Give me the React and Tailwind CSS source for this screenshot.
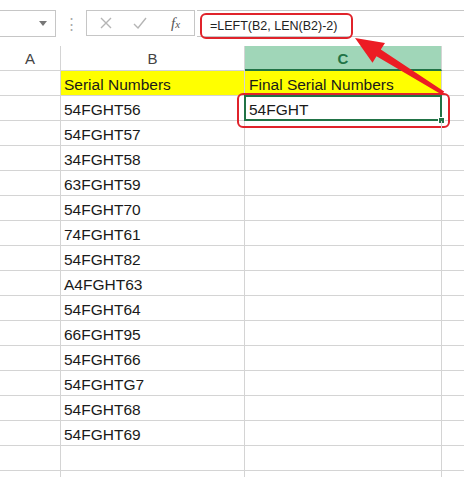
import { Fragment } from 'react'

const serials = [
  '54FGHT56', '54FGHT57', '34FGHT58', '63FGHT59', '54FGHT70', '74FGHT61', '54FGHT82',
  'A4FGHT63', '54FGHT64', '66FGHT95', '54FGHT66', '54FGHTG7', '54FGHT68', '54FGHT69',
]

const font = { fontFamily: '"Liberation Sans", Arial, sans-serif' }

function Arrow() {
  return (
    <svg className="absolute left-0 top-0 pointer-events-none" width="464" height="477" viewBox="0 0 464 477">
      <polygon
        points="355,38 385,43 380.8,49.6 444.2,91.4 442,94.8 376.5,56.2 372.5,62.8"
        fill="#ec1c24"
      />
    </svg>
  )
}

function Toolbar() {
  return (
    <div className="flex items-start h-[46px] pt-[10px] text-[#999]">
      {/* name box */}
      <div className="relative w-[56px] h-[27px] border border-l-0 border-[#c6c6c6]">
        <span className="absolute left-[39px] top-[10px] w-0 h-0 border-l-[4px] border-r-[4px] border-t-[5px] border-l-transparent border-r-transparent border-t-[#777]" />
      </div>
      <div className="w-[30px] h-[26px] flex items-center justify-center text-[#aaa] text-[15px] leading-none">⋮</div>
      {/* cancel / enter / fx */}
      <div className="w-[109px] h-[26px] border border-[#c6c6c6] flex items-center">
        <svg className="ml-[13px]" width="12" height="12" viewBox="0 0 12 12">
          <path d="M1 1 L11 11 M11 1 L1 11" stroke="#b5b5b5" strokeWidth="1.4" fill="none" />
        </svg>
        <svg className="ml-[21px]" width="14" height="12" viewBox="0 0 14 12">
          <path d="M1 7 L5 11 L13 1" stroke="#b5b5b5" strokeWidth="1.4" fill="none" />
        </svg>
        <span
          className="ml-[24px] text-[15px] italic text-[#555]"
          style={{ fontFamily: '"Liberation Serif", "Times New Roman", serif' }}
        >
          f<span className="text-[11px]">x</span>
        </span>
      </div>
      {/* formula input */}
      <div className="relative flex-1 h-[27px] ml-[2px] border-y border-[#c6c6c6]">
        <div className="absolute left-[3px] top-[2px] w-[153px] h-[26px] border-2 border-[#e0232b] rounded-[6px]" />
        <span className="absolute left-[13px] top-[6px] text-[12.5px] text-[#222]" style={font}>
          =LEFT(B2, LEN(B2)-2)
        </span>
      </div>
    </div>
  )
}

export default function App() {
  const rows = [['Serial Numbers', 'Final Serial Numbers'], ...serials.map((s, i) => [s, i === 0 ? '54FGHT' : ''])]
  rows.push(['', ''], ['', ''])

  return (
    <div className="relative w-[464px] h-[477px] overflow-hidden bg-white" style={font}>
      <Toolbar />

      {/* column headers */}
      <div className="flex h-[25px] text-[15px] text-[#444]">
        <div className="w-[61px] pt-[3px] border-r border-b border-[#d4d4d4] flex items-center justify-center">A</div>
        <div className="w-[184px] pt-[3px] border-r border-b border-[#d4d4d4] flex items-center justify-center">B</div>
        <div className="w-[197px] pt-[3px] border-r border-b-2 border-r-[#d4d4d4] border-b-[#217346] bg-[#a0d6b8] flex items-center justify-center font-bold text-[#217346]">
          C
        </div>
        <div className="flex-1 border-b border-[#d4d4d4]" />
      </div>

      {/* grid */}
      <div className="text-[15.5px] text-[#1a1a1a]">
        {rows.map((r, i) => (
          <Fragment key={i}>
            <div className="flex h-[25px]">
              <div className="w-[61px] shrink-0 border-r border-b border-[#d4d4d4]" />
              <div
                className={`w-[184px] shrink-0 border-r border-b border-[#d4d4d4] pl-[3px] pt-[3px] flex items-center ${i === 0 ? 'bg-[#ffff00]' : ''}`}
              >
                {r[0]}
              </div>
              <div
                className={`relative w-[197px] shrink-0 border-r border-b border-[#d4d4d4] pl-[4px] pt-[3px] flex items-center ${i === 0 ? 'bg-[#ffff00]' : ''}`}
              >
                {r[1]}
                {i === 1 && (
                  <>
                    <div className="absolute -left-px -top-px -right-px -bottom-px border-2 border-[#217346]" />
                    <div className="absolute -right-[4px] -bottom-[4px] w-[7px] h-[7px] bg-[#217346] border border-white" />
                    <div className="absolute -left-[8px] -top-[3px] -right-[9px] -bottom-[8px] border-2 border-[#e0232b] rounded-[6px]" />
                  </>
                )}
              </div>
              <div className="flex-1 border-b border-[#d4d4d4]" />
            </div>
          </Fragment>
        ))}
      </div>

      <Arrow />
    </div>
  )
}
